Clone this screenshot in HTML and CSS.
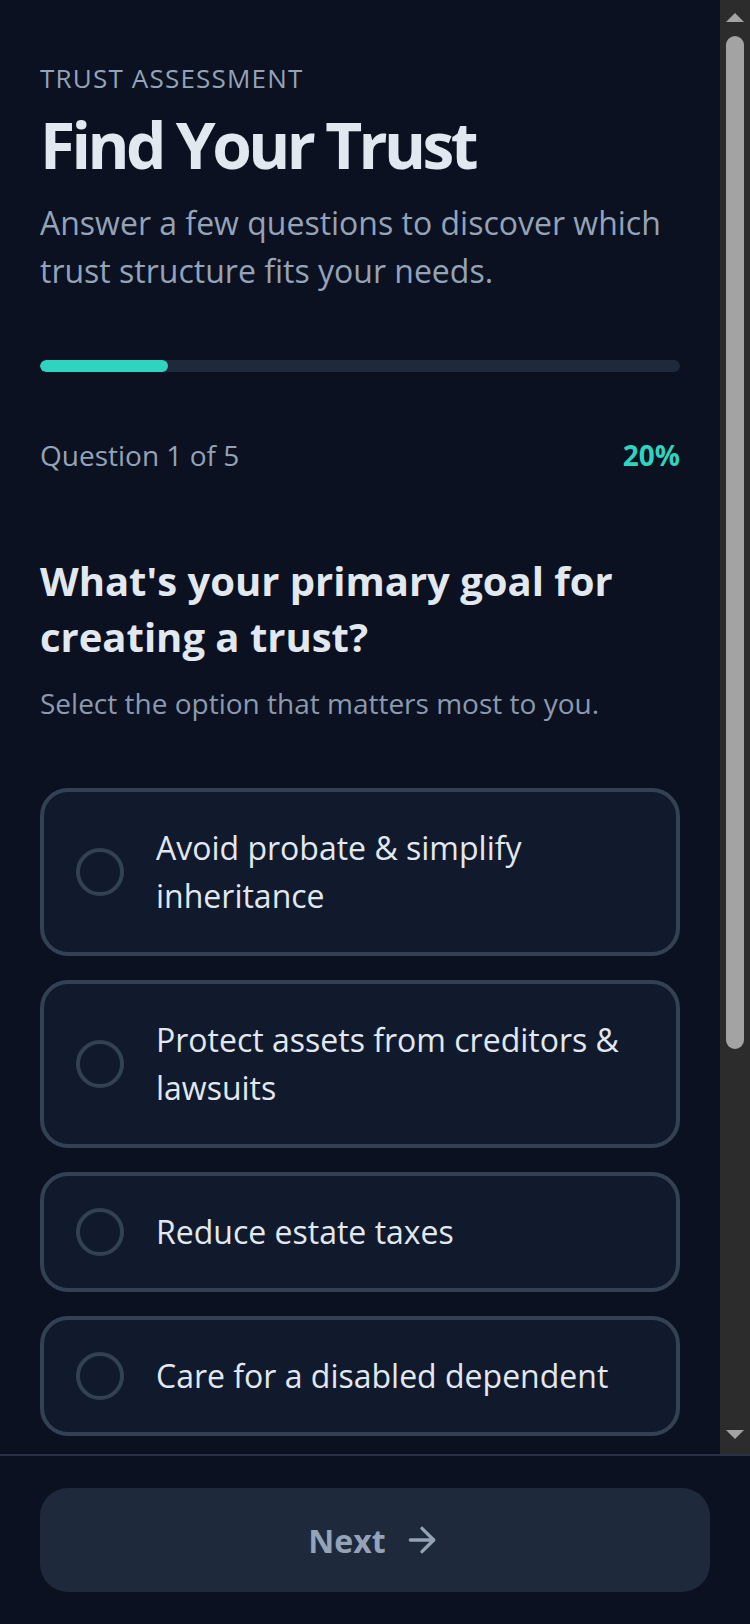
FILE: index.html
```html
<!DOCTYPE html>
<html lang="en">
<head>
<meta charset="utf-8">
<meta name="viewport" content="width=device-width, initial-scale=1">
<title>Find Your Trust</title>
<link rel="stylesheet" href="styles.css">
</head>
<body>
<div class="app">
  <div class="viewport">
    <main class="scroll">
      <header class="intro">
        <p class="eyebrow">TRUST ASSESSMENT</p>
        <h1 class="title">Find Your Trust</h1>
        <p class="lead">Answer a few questions to discover which trust structure fits your needs.</p>
      </header>

      <div class="progress" role="progressbar" aria-valuenow="20" aria-valuemin="0" aria-valuemax="100">
        <div class="progress-fill" style="width: 20%"></div>
      </div>
      <div class="progress-meta">
        <span class="step">Question 1 of 5</span>
        <span class="percent">20%</span>
      </div>

      <section class="question">
        <h2 class="question-title">What's your primary goal for creating a trust?</h2>
        <p class="question-hint">Select the option that matters most to you.</p>

        <div class="options" role="radiogroup">
          <label class="option">
            <input class="option-input" type="radio" name="goal" value="probate">
            <span class="radio"></span>
            <span class="option-text">Avoid probate &amp; simplify inheritance</span>
          </label>
          <label class="option">
            <input class="option-input" type="radio" name="goal" value="protect">
            <span class="radio"></span>
            <span class="option-text">Protect assets from creditors &amp; lawsuits</span>
          </label>
          <label class="option">
            <input class="option-input" type="radio" name="goal" value="taxes">
            <span class="radio"></span>
            <span class="option-text">Reduce estate taxes</span>
          </label>
          <label class="option">
            <input class="option-input" type="radio" name="goal" value="dependent">
            <span class="radio"></span>
            <span class="option-text">Care for a disabled dependent</span>
          </label>
        </div>
      </section>
    </main>

    <!-- classic scrollbar rail beside the question list -->
    <div class="rail" aria-hidden="true">
      <div class="rail-btn rail-btn-up">
        <svg class="rail-arrow" viewBox="0 0 18 9"><path d="M9 0L18 9H0z"/></svg>
      </div>
      <div class="rail-track">
        <div class="rail-thumb"></div>
      </div>
      <div class="rail-btn rail-btn-down">
        <svg class="rail-arrow" viewBox="0 0 18 9"><path d="M0 0H18L9 9z"/></svg>
      </div>
    </div>
  </div>

  <footer class="footer">
    <button class="next" type="button" disabled>
      <span>Next</span>
      <svg class="next-icon" viewBox="0 0 24 24" fill="none" stroke="currentColor" stroke-width="2" stroke-linecap="round" stroke-linejoin="round" aria-hidden="true">
        <path d="M5 12h14"/>
        <path d="M12 5l7 7-7 7"/>
      </svg>
    </button>
  </footer>
</div>
</body>
</html>
```
FILE: styles.css
```css
* {
  box-sizing: border-box;
}

html,
body {
  margin: 0;
  padding: 0;
  height: 100%;
  background: #0b1120;
}

body {
  font-family: "Open Sans", "Noto Sans", "Liberation Sans", sans-serif;
  color: #e2e8f0;
}

.app {
  height: 1624px;
  display: flex;
  flex-direction: column;
}

/* Scroll region: content column + scrollbar rail */
.viewport {
  flex: 1;
  min-height: 0;
  display: flex;
}

.scroll {
  flex: 1;
  min-width: 0;
  overflow-y: auto;
  scrollbar-width: none;
  padding: 60px 40px 40px;
}

.rail {
  flex: none;
  width: 30px;
  display: flex;
  flex-direction: column;
  background: #2c2c2c;
}

.rail-btn {
  flex: none;
  height: 30px;
  display: flex;
  justify-content: center;
}

.rail-btn-up {
  align-items: flex-start;
  padding-top: 13px;
}

.rail-btn-down {
  align-items: flex-end;
  padding-bottom: 15px;
}

.rail-arrow {
  width: 18px;
  height: 9px;
  fill: #a3a3a3;
}

.rail-track {
  flex: 1;
  padding: 6px;
}

.rail-thumb {
  height: 1013px;
  border-radius: 9px;
  background: #a3a3a3;
}

/* Intro */
.eyebrow {
  margin: 0;
  font-size: 26px;
  line-height: 36px;
  letter-spacing: 1.2px;
  color: #94a3b8;
}

.title {
  margin: 11px 0 0;
  font-size: 64px;
  line-height: 76px;
  font-weight: 700;
  letter-spacing: -3.6px;
  color: #e2e8f0;
}

.lead {
  margin: 16px 0 0;
  font-size: 32px;
  line-height: 48px;
  color: #94a3b8;
}

/* Progress */
.progress {
  margin-top: 65px;
  height: 12px;
  border-radius: 6px;
  background: #1e293b;
  overflow: hidden;
}

.progress-fill {
  height: 100%;
  border-radius: 6px;
  background: #2dd4bf;
}

.progress-meta {
  margin-top: 63px;
  display: flex;
  justify-content: space-between;
  align-items: baseline;
  font-size: 28px;
  line-height: 40px;
}

.step {
  color: #94a3b8;
}

.percent {
  color: #2dd4bf;
  font-weight: 700;
}

/* Question */
.question {
  margin-top: 78px;
}

.question-title {
  margin: 0;
  font-size: 40px;
  line-height: 56px;
  font-weight: 700;
  color: #e2e8f0;
}

.question-hint {
  margin: 18px 0 0;
  font-size: 28px;
  line-height: 40px;
  color: #8b9ab0;
}

.options {
  margin-top: 65px;
  display: flex;
  flex-direction: column;
  gap: 24px;
}

.option {
  display: flex;
  align-items: center;
  gap: 32px;
  padding: 32px;
  border: 4px solid #334155;
  border-radius: 28px;
  background: #111a2c;
  font-size: 32px;
  line-height: 48px;
  color: #e2e8f0;
  cursor: pointer;
}

.option-input {
  position: absolute;
  opacity: 0;
  pointer-events: none;
}

.radio {
  flex: none;
  width: 48px;
  height: 48px;
  border: 4px solid #334155;
  border-radius: 50%;
}

/* Footer */
.footer {
  flex: none;
  padding: 32px 40px;
  border-top: 2px solid #273244;
  background: #0b1120;
}

.next {
  width: 100%;
  height: 104px;
  display: flex;
  align-items: center;
  justify-content: center;
  gap: 16px;
  border: 0;
  border-radius: 28px;
  background: #1e293b;
  color: #94a3b8;
  font-family: inherit;
  font-size: 32px;
  font-weight: 700;
}

.next-icon {
  width: 40px;
  height: 40px;
}
```
